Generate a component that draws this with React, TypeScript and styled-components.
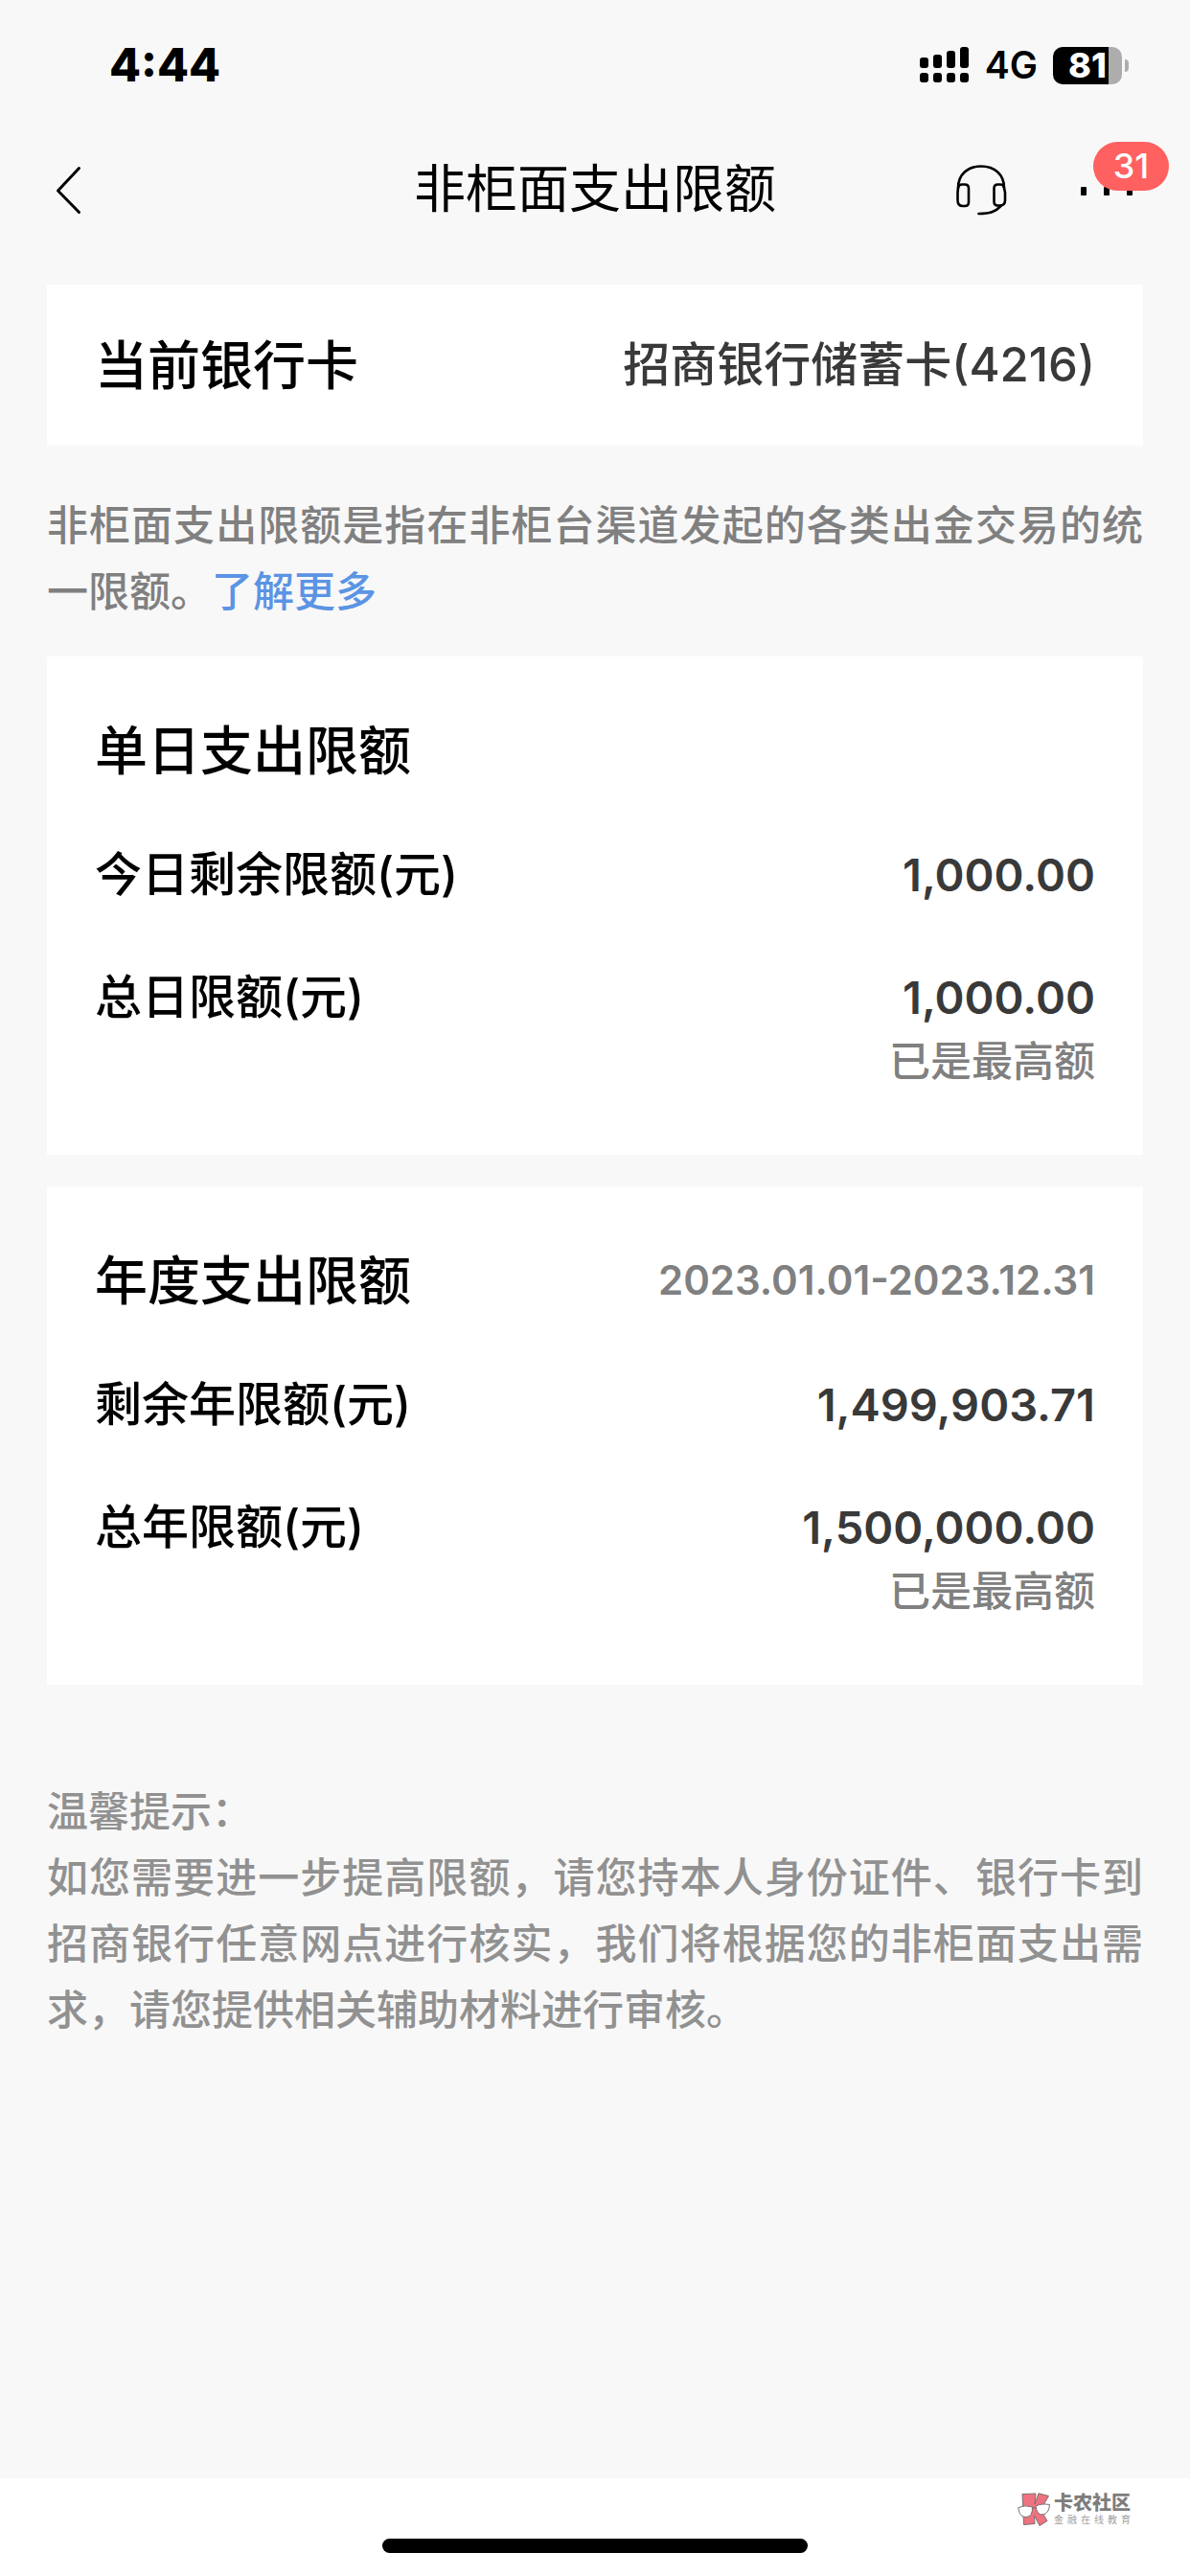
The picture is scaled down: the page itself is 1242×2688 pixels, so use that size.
import React from "react";
import styled, { createGlobalStyle } from "styled-components";

const GlobalStyle = createGlobalStyle`
  *, *::before, *::after { box-sizing: border-box; }
  body {
    margin: 0;
    background: #f8f8f8;
    color: #000;
    font-family: Inter, "Noto Sans CJK SC", sans-serif;
  }
  h1, h2, p, dl, dd { margin: 0; }
`;

const Screen = styled.div`
  display: flex;
  flex-direction: column;
  min-height: 100vh;
`;

const StatusBar = styled.div`
  display: flex;
  align-items: center;
  justify-content: space-between;
  height: 132px;
  padding: 4px 64px 0 114px;
`;

const Clock = styled.time`
  font-size: 48px;
  font-weight: 800;
  line-height: 56px;
`;

const StatusIcons = styled.div`
  display: flex;
  align-items: center;
  gap: 16px;
`;

const Network = styled.span`
  font-size: 39px;
  font-weight: 600;
  line-height: 40px;
`;

const Battery = styled.div`
  display: flex;
  align-items: center;
  gap: 3px;

  &::after {
    content: "";
    width: 4px;
    height: 13px;
    border-radius: 0 6px 6px 0;
    background: #adadad;
  }
`;

const BatteryBody = styled.div<{ $level: number }>`
  width: 72px;
  height: 39px;
  border-radius: 10px;
  background: linear-gradient(
    to right,
    #000 ${(p) => p.$level}%,
    #adadad ${(p) => p.$level}%
  );
  color: #fff;
  font-size: 36px;
  font-weight: 800;
  line-height: 39px;
  text-align: center;
`;

const NavBar = styled.header`
  display: grid;
  grid-template-columns: 1fr auto 1fr;
  align-items: center;
  height: 132px;
  padding: 0 57px;
`;

const NavTitle = styled.h1`
  font-size: 54px;
  font-weight: 400;
  line-height: 72px;
`;

const NavActions = styled.div`
  display: flex;
  align-items: center;
  justify-content: flex-end;
  gap: 76px;
`;

const IconButton = styled.button`
  position: relative;
  display: flex;
  justify-self: start;
  padding: 0;
  border: 0;
  background: none;
  color: #000;
  font-family: inherit;
  cursor: pointer;
`;

const Badge = styled.span`
  position: absolute;
  right: -35px;
  bottom: 6px;
  min-width: 79px;
  height: 51px;
  border-radius: 26px;
  background: #ff6060;
  color: #fff;
  font-size: 36px;
  font-weight: 500;
  line-height: 51px;
  text-align: center;
`;

const Content = styled.main`
  flex: 1;
  padding: 33px 49px 0;
`;

const Card = styled.section<{ $compact?: boolean }>`
  display: flex;
  flex-direction: column;
  gap: 64px;
  padding: ${(p) => (p.$compact ? "50px" : "64px 50px 63px")};
  background: #fff;

  & + & { margin-top: 33px; }
`;

const CardHeader = styled.div`
  display: flex;
  align-items: center;
  justify-content: space-between;
`;

const CardTitle = styled.h2`
  font-size: 55px;
  font-weight: 500;
  line-height: 68px;
`;

const CardName = styled.span`
  color: #393939;
  font-size: 49px;
  font-weight: 500;
  line-height: 64px;
`;

const Period = styled.span`
  color: #808080;
  font-size: 42px;
  font-weight: 600;
  line-height: 68px;
`;

const LimitList = styled.dl`
  display: flex;
  flex-direction: column;
  gap: 64px;
`;

const LimitRow = styled.div`
  display: flex;
  justify-content: space-between;
  line-height: 64px;
`;

const LimitLabel = styled.dt`
  font-size: 49px;
  font-weight: 500;
`;

const LimitValue = styled.dd`
  color: #393939;
  font-size: 47px;
  font-weight: 600;
  text-align: right;
`;

const LimitNote = styled.p`
  color: #808080;
  font-size: 43px;
  font-weight: 500;
  line-height: 69px;
`;

const Description = styled.p`
  margin: 49px 0 33px;
  color: #808080;
  font-size: 43px;
  font-weight: 500;
  line-height: 69px;
  text-align: justify;
`;

const MoreLink = styled.a`
  color: #5b94e4;
  text-decoration: none;
`;

const Tips = styled.section`
  margin-top: 98px;
  color: #919191;
  font-size: 43px;
  font-weight: 500;
  line-height: 69px;
  text-align: justify;
`;

const Footer = styled.footer`
  display: flex;
  flex-direction: column;
  gap: 12px;
  padding: 15px 62px 24px;
  background: #fff;
`;

const Brand = styled.div`
  display: flex;
  align-items: center;
  align-self: flex-end;
  gap: 4px;
  height: 36px;
`;

const BrandText = styled.div`
  width: 80px;
  color: #7d7d7d;
  text-align-last: justify;
`;

const BrandName = styled.div`
  font-size: 20px;
  font-weight: 900;
  line-height: 20px;
`;

const BrandTagline = styled.div`
  color: #a0a0a0;
  font-size: 10px;
  line-height: 14px;
`;

const HomeIndicator = styled.div`
  align-self: center;
  width: 40%;
  max-width: 444px;
  height: 15px;
  border-radius: 8px;
  background: #000;
`;

const SignalIcon = () => (
  <svg width="52" height="38" viewBox="0 0 52 38" aria-hidden="true">
    {[11, 8, 4, 0].map((top, i) => (
      <g key={top}>
        <rect x={i * 14} y={top} width="9" height={22 - top} rx="3" />
        <rect x={i * 14} y="27" width="9" height="10" rx="3" />
      </g>
    ))}
  </svg>
);

const BackIcon = () => (
  <svg width="28" height="52" viewBox="0 0 28 52" fill="none" stroke="currentColor" strokeWidth="3" strokeLinecap="round" strokeLinejoin="round" aria-hidden="true">
    <path d="M25.500 3.500L3.500 27L25.500 49.500" />
  </svg>
);

const HeadsetIcon = () => (
  <svg width="54" height="54" viewBox="0 0 54 54" fill="none" stroke="currentColor" strokeWidth="2.600" strokeLinecap="round" strokeLinejoin="round" aria-hidden="true">
    <path d="M3 25C3 11 13 2.500 27 2.500S51 11 51 25" />
    <path d="M3 25C3.500 22.500 5 21.500 7 21.500H10Q14 21.500 14 25.500V40Q14 44 10 44H8Q2.500 44 2.500 38V30Z" />
    <path d="M51 25C50.500 22.500 49 21.500 47 21.500H44.500Q40.500 21.500 40.500 25.500V39.500Q40.500 43.500 44.500 43.500H46.500Q52 43.500 52 38V30Z" />
    <path d="M47.500 44C42 50 36 52 24.500 52" />
  </svg>
);

const MoreIcon = () => (
  <svg width="58" height="14" viewBox="0 0 58 14" aria-hidden="true">
    {[1, 25, 49].map((x) => (
      <rect key={x} x={x} y="4" width="6" height="9" rx="1" />
    ))}
  </svg>
);

const BrandIcon = () => (
  <svg width="34" height="36" viewBox="0 0 34 36" fill="#ee7280" stroke="#7d7070" strokeWidth="1" strokeLinejoin="round" aria-hidden="true">
    <path d="M5 1.500L19 1L18 12L22 0.800L32.500 3.500L24 18L31 29.500L23 34.500L17.500 24L18 32.500L6.500 33.500Z" />
    <path fill="#fff" d="M0.800 15.500Q8 12.500 15.500 15Q16 25 9 25.500Q2.500 25.500 1.200 18ZM19 14Q25 11 33.500 12.500Q33 22 26 23Q20 23 19 14Z" />
    <path fill="none" d="M15.500 17Q17 14.500 19.200 16" />
  </svg>
);

type Limit = { label: string; value: string; note?: string };

type LimitGroup = { title: string; period?: string; limits: Limit[] };

const groups: LimitGroup[] = [
  {
    title: "单日支出限额",
    limits: [
      { label: "今日剩余限额(元)", value: "1,000.00" },
      { label: "总日限额(元)", value: "1,000.00", note: "已是最高额" },
    ],
  },
  {
    title: "年度支出限额",
    period: "2023.01.01-2023.12.31",
    limits: [
      { label: "剩余年限额(元)", value: "1,499,903.71" },
      { label: "总年限额(元)", value: "1,500,000.00", note: "已是最高额" },
    ],
  },
];

const LimitCard = ({ title, period, limits }: LimitGroup) => (
  <Card>
    <CardHeader>
      <CardTitle>{title}</CardTitle>
      {period && <Period>{period}</Period>}
    </CardHeader>
    <LimitList>
      {limits.map(({ label, value, note }) => (
        <LimitRow key={label}>
          <LimitLabel>{label}</LimitLabel>
          <LimitValue>
            {value}
            {note && <LimitNote>{note}</LimitNote>}
          </LimitValue>
        </LimitRow>
      ))}
    </LimitList>
  </Card>
);

export default function App() {
  return (
    <Screen>
      <GlobalStyle />
      <StatusBar>
        <Clock>4:44</Clock>
        <StatusIcons>
          <SignalIcon />
          <Network>4G</Network>
          <Battery>
            <BatteryBody $level={81}>81</BatteryBody>
          </Battery>
        </StatusIcons>
      </StatusBar>
      <NavBar>
        <IconButton type="button" aria-label="返回">
          <BackIcon />
        </IconButton>
        <NavTitle>非柜面支出限额</NavTitle>
        <NavActions>
          <IconButton type="button" aria-label="客服">
            <HeadsetIcon />
          </IconButton>
          <IconButton type="button" aria-label="更多">
            <MoreIcon />
            <Badge>31</Badge>
          </IconButton>
        </NavActions>
      </NavBar>
      <Content>
        <Card $compact>
          <CardHeader>
            <CardTitle>当前银行卡</CardTitle>
            <CardName>招商银行储蓄卡(4216)</CardName>
          </CardHeader>
        </Card>
        <Description>
          非柜面支出限额是指在非柜台渠道发起的各类出金交易的统一限额。
          <MoreLink href="#more">了解更多</MoreLink>
        </Description>
        {groups.map((group) => (
          <LimitCard key={group.title} {...group} />
        ))}
        <Tips>
          <p>温馨提示：</p>
          <p>
            如您需要进一步提高限额，请您持本人身份证件、银行卡到招商银行任意网点进行核实，我们将根据您的非柜面支出需求，请您提供相关辅助材料进行审核。
          </p>
        </Tips>
      </Content>
      <Footer>
        <Brand>
          <BrandIcon />
          <BrandText>
            <BrandName>卡农社区</BrandName>
            <BrandTagline>金融在线教育</BrandTagline>
          </BrandText>
        </Brand>
        <HomeIndicator />
      </Footer>
    </Screen>
  );
}
